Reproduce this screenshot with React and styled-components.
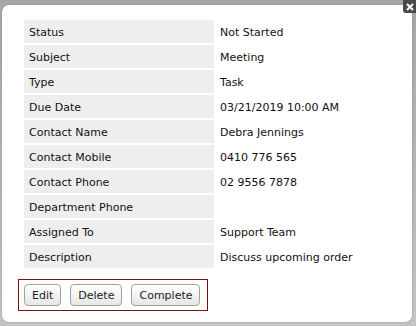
import { Fragment } from 'react';
import styled, { createGlobalStyle } from 'styled-components';

const GlobalStyle = createGlobalStyle`
  html, body {
    margin: 0;
    padding: 0;
    background: #b4b4b4;
  }
  body {
    font-family: "DejaVu Sans", Verdana, sans-serif;
    font-size: 11px;
    color: #111;
  }
`

const Backdrop = styled.div`
  position: relative;
  width: 416px;
  height: 326px;
  box-sizing: border-box;
  padding: 5px 4px 4px 2px;
  background: linear-gradient(#a6a6a6, #b8b8b8 60%, #c4c4c4);
`

const Dialog = styled.div`
  height: 100%;
  box-sizing: border-box;
  background: #fff;
  border-radius: 7px;
  padding: 15px 16px 0 16px;
  box-shadow: 0 0 2px rgba(0, 0, 0, 0.25);
`

const CloseButton = styled.button`
  position: absolute;
  top: 0;
  right: 0;
  width: 13px;
  height: 13px;
  padding: 0;
  border: none;
  border-radius: 0 0 0 3px;
  background: #4a4a4a;
  display: flex;
  align-items: center;
  justify-content: center;
`

const DetailGrid = styled.div`
  display: grid;
  grid-template-columns: 190px 1fr;
  grid-auto-rows: 23px;
  column-gap: 2px;
  row-gap: 2px;
  margin-left: 6px;
`

const Label = styled.div`
  background: #eeeeee;
  padding: 1px 0 0 5px;
  display: flex;
  align-items: center;
`

const Value = styled.div`
  padding: 1px 0 0 4px;
  display: flex;
  align-items: center;
`

const Actions = styled.div`
  display: inline-flex;
  gap: 9px;
  margin-top: 11px;
  padding: 4px 7px 4px 5px;
  border: 1px solid #7a1010;
`

const Button = styled.button`
  height: 22px;
  padding: 1px 7px 0;
  font-family: "DejaVu Sans", Verdana, sans-serif;
  font-size: 11px;
  color: #222;
  border: 1px solid #a0a0a0;
  border-radius: 4px;
  background: linear-gradient(#ffffff, #e6e6e6);
`

const rows = [
  ['Status', 'Not Started'],
  ['Subject', 'Meeting'],
  ['Type', 'Task'],
  ['Due Date', '03/21/2019 10:00 AM'],
  ['Contact Name', 'Debra Jennings'],
  ['Contact Mobile', '0410 776 565'],
  ['Contact Phone', '02 9556 7878'],
  ['Department Phone', ''],
  ['Assigned To', 'Support Team'],
  ['Description', 'Discuss upcoming order'],
]

export default function App() {
  return (
    <>
      <GlobalStyle />
      <Backdrop>
        <Dialog>
          <DetailGrid>
            {rows.map(([label, value]) => (
              <Fragment key={label}>
                <Label>{label}</Label>
                <Value>{value}</Value>
              </Fragment>
            ))}
          </DetailGrid>
          <Actions>
            <Button>Edit</Button>
            <Button>Delete</Button>
            <Button>Complete</Button>
          </Actions>
        </Dialog>
        <CloseButton aria-label="Close">
          <svg width="8" height="8" viewBox="0 0 8 8">
            <path d="M1 1L7 7M7 1L1 7" stroke="#fff" strokeWidth="2" />
          </svg>
        </CloseButton>
      </Backdrop>
    </>
  )
}
